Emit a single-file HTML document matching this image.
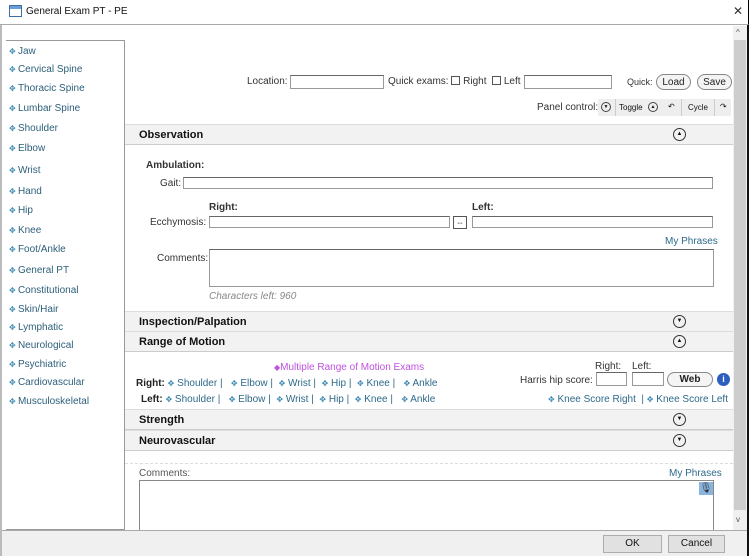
<!DOCTYPE html>
<html><head><style>
*{box-sizing:border-box;margin:0;padding:0}
body{width:749px;height:556px;position:relative;overflow:hidden;background:#fff;font-family:"Liberation Sans",sans-serif;font-size:10px;color:#333}
.a{position:absolute}
.side div{position:absolute;left:3px;font-size:10px;color:#2d5f7a}
.side div:before{content:"✥ ";color:#3a87b0;font-size:8px}
input,.box{position:absolute;border:1px solid #999;border-top:1px solid #666;background:#fff}
.hdr{position:absolute;left:125px;width:608px;height:21px;background:#f2f2f2;border-top:1px solid #ddd;border-bottom:1px solid #ccc;font-weight:bold;font-size:11px;color:#111;padding:4px 0 0 14px}
.circ{position:absolute;left:548px;top:3px;width:13px;height:13px;border:1px solid #333;border-radius:50%;font-size:6px;text-align:center;line-height:11px;font-weight:normal}
.lk{color:#2d6a8a}
.lk i{font-style:normal;color:#3a87b0;font-size:8px}
.btn{position:absolute;border:1px solid #888;border-radius:9px;background:#f4f4f4;font-size:10px;color:#222;display:flex;align-items:center;justify-content:center}
</style></head><body>
<div class="a" style="left:0;top:0;width:749px;height:25px;border-bottom:1px solid #aaa;border-right:1px solid #000"></div>
<div class="a" style="left:9px;top:5px;width:13px;height:12px;border:1px solid #3b6ea5;background:linear-gradient(#6a9ed6 0 3px,#fff 3px)"></div>
<div class="a" style="left:26px;top:6px;font-size:10px;color:#111">General Exam PT - PE</div>
<div class="a" style="left:733px;top:4px;font-size:12px;color:#333">✕</div>
<div class="a" style="left:0;top:25px;width:2px;height:531px;background:#bbb"></div>
<div class="a" style="left:747px;top:25px;width:2px;height:531px;background:#111"></div>
<div class="a" style="left:733px;top:26px;width:14px;height:504px;background:#f0f0f0"></div>
<div class="a" style="left:736px;top:28px;font-size:8px;color:#555">^</div>
<div class="a" style="left:734px;top:40px;width:12px;height:470px;background:#cdcdcd"></div>
<div class="a" style="left:736px;top:515px;font-size:8px;color:#555">v</div>
<div class="a side" style="left:6px;top:40px;width:119px;height:490px;border:1px solid #999;border-left:none">
<div style="top:5px">Jaw</div><div style="top:23px">Cervical Spine</div><div style="top:42px">Thoracic Spine</div><div style="top:62px">Lumbar Spine</div><div style="top:82px">Shoulder</div><div style="top:102px">Elbow</div><div style="top:124px">Wrist</div><div style="top:145px">Hand</div><div style="top:164px">Hip</div><div style="top:184px">Knee</div><div style="top:203px">Foot/Ankle</div><div style="top:224px">General PT</div><div style="top:244px">Constitutional</div><div style="top:263px">Skin/Hair</div><div style="top:281px">Lymphatic</div><div style="top:299px">Neurological</div><div style="top:318px">Psychiatric</div><div style="top:336px">Cardiovascular</div><div style="top:355px">Musculoskeletal</div>
</div>
<div class="a" style="left:247px;top:76px">Location:</div>
<input style="left:290px;top:75px;width:94px;height:14px">
<div class="a" style="left:388px;top:76px">Quick exams: <span style="display:inline-block;width:9px;height:9px;border:1px solid #555;vertical-align:-1px"></span> Right &nbsp;<span style="display:inline-block;width:9px;height:9px;border:1px solid #555;vertical-align:-1px"></span> Left</div>
<input style="left:524px;top:75px;width:88px;height:14px">
<div class="a" style="left:627px;top:77px;font-size:9px">Quick:</div>
<div class="btn" style="left:656px;top:74px;width:35px;height:16px">Load</div>
<div class="btn" style="left:697px;top:74px;width:35px;height:16px">Save</div>
<div class="a" style="left:537px;top:102px">Panel control:</div>
<div class="a" style="left:598px;top:99px;width:133px;height:17px;background:#eee;font-size:8px;color:#111">
<span class="a" style="left:3px;top:3px;width:10px;height:10px;border:1px solid #444;border-radius:50%;font-size:5px;text-align:center;line-height:8px">▼</span>
<span class="a" style="left:17px;top:0;height:17px;border-left:1px solid #ccc;padding:4px 3px">Toggle</span>
<span class="a" style="left:50px;top:3px;width:10px;height:10px;border:1px solid #444;border-radius:50%;font-size:5px;text-align:center;line-height:8px">▲</span>
<span class="a" style="left:70px;top:3px">↶</span>
<span class="a" style="left:83px;top:0;height:17px;border-left:1px solid #ccc;border-right:1px solid #ccc;padding:4px 6px">Cycle</span>
<span class="a" style="left:122px;top:3px">↷</span></div>
<div class="hdr" style="top:124px">Observation<div class="circ">▲</div></div>
<div class="a" style="left:146px;top:160px;font-weight:bold;color:#333">Ambulation:</div>
<div class="a" style="left:160px;top:178px">Gait:</div>
<input style="left:183px;top:177px;width:530px;height:12px">
<div class="a" style="left:209px;top:202px;font-weight:bold">Right:</div>
<div class="a" style="left:472px;top:202px;font-weight:bold">Left:</div>
<div class="a" style="left:150px;top:217px">Ecchymosis:</div>
<input style="left:209px;top:216px;width:241px;height:12px">
<div class="a" style="left:453px;top:216px;width:14px;height:13px;border:1px solid #555;font-size:8px;text-align:center;line-height:11px">⇔</div>
<input style="left:472px;top:216px;width:241px;height:12px">
<div class="a lk" style="left:665px;top:236px">My Phrases</div>
<div class="a" style="left:157px;top:253px">Comments:</div>
<div class="box" style="left:209px;top:249px;width:505px;height:38px"></div>
<div class="a" style="left:209px;top:291px;font-style:italic;color:#888">Characters left: 960</div>
<div class="hdr" style="top:311px">Inspection/Palpation<div class="circ">▼</div></div>
<div class="hdr" style="top:331px">Range of Motion<div class="circ">▲</div></div>
<div class="a" style="left:274px;top:362px;color:#c050e0"><span style="font-size:8px">◆</span>Multiple Range of Motion Exams</div>
<div class="a lk" style="left:136px;top:378px"><b style="color:#222">Right:</b> <i>✥</i> Shoulder | &nbsp; <i>✥</i> Elbow | &nbsp;<i>✥</i> Wrist | &nbsp;<i>✥</i> Hip | &nbsp;<i>✥</i> Knee | &nbsp; <i>✥</i> Ankle</div>
<div class="a lk" style="left:141px;top:394px"><b style="color:#222">Left:</b> <i>✥</i> Shoulder | &nbsp; <i>✥</i> Elbow | &nbsp;<i>✥</i> Wrist | &nbsp;<i>✥</i> Hip | &nbsp;<i>✥</i> Knee | &nbsp; <i>✥</i> Ankle</div>
<div class="a" style="left:595px;top:361px">Right:</div>
<div class="a" style="left:632px;top:361px">Left:</div>
<div class="a" style="left:520px;top:375px">Harris hip score:</div>
<input style="left:596px;top:372px;width:31px;height:14px">
<input style="left:632px;top:372px;width:32px;height:14px">
<div class="btn" style="left:667px;top:372px;width:46px;height:15px;font-weight:bold">Web</div>
<div class="a" style="left:717px;top:373px;width:13px;height:13px;border-radius:50%;background:#2a5fc0;color:#fff;font-size:9px;font-weight:bold;text-align:center;line-height:13px">i</div>
<div class="a lk" style="left:548px;top:394px"><i>✥</i> Knee Score Right &nbsp;| <i>✥</i> Knee Score Left</div>
<div class="hdr" style="top:409px">Strength<div class="circ">▼</div></div>
<div class="hdr" style="top:430px">Neurovascular<div class="circ">▼</div></div>
<div class="a" style="left:125px;top:463px;width:608px;border-top:1px dashed #ddd"></div>
<div class="a" style="left:139px;top:468px;color:#555">Comments:</div>
<div class="a lk" style="left:669px;top:468px">My Phrases</div>
<div class="box" style="left:139px;top:480px;width:575px;height:52px;border-color:#888"></div>
<div class="a" style="left:699px;top:482px;width:14px;height:13px;background:#8ab4e0;font-size:10px;text-align:center;line-height:13px">🎙</div>
<div class="a" style="left:2px;top:530px;width:745px;height:26px;background:#f0f0f0;border-top:1px solid #aaa"></div>
<div class="a" style="left:603px;top:535px;width:59px;height:18px;background:#e1e1e1;border:1px solid #adadad;text-align:center;line-height:16px;color:#111">OK</div>
<div class="a" style="left:668px;top:535px;width:57px;height:18px;background:#e1e1e1;border:1px solid #adadad;text-align:center;line-height:16px;color:#111">Cancel</div>
</body></html>
